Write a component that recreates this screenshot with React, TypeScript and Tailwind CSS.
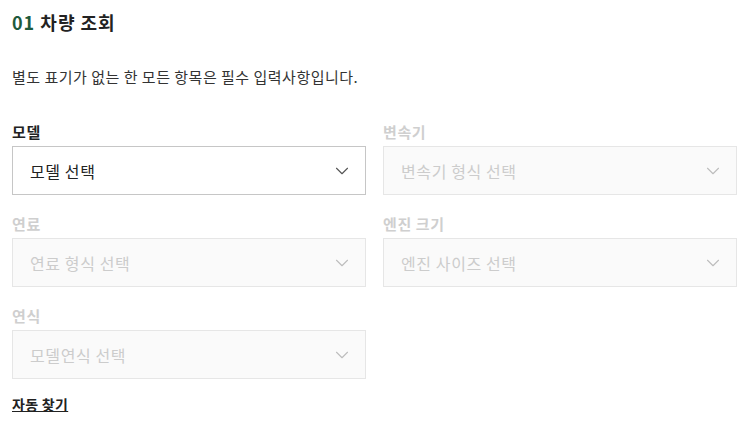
import { ChevronDown } from 'lucide-react';

type Field = { label: string; placeholder: string; disabled: boolean };

const fields: Field[] = [
  { label: '모델', placeholder: '모델 선택', disabled: false },
  { label: '변속기', placeholder: '변속기 형식 선택', disabled: true },
  { label: '연료', placeholder: '연료 형식 선택', disabled: true },
  { label: '엔진 크기', placeholder: '엔진 사이즈 선택', disabled: true },
  { label: '연식', placeholder: '모델연식 선택', disabled: true },
];

function SelectBox({ field }: { field: Field }) {
  return (
    <div>
      <div
        className={
          field.disabled
            ? 'text-[15px] leading-5 font-bold tracking-[0.6px] text-[#cfcfcf] mb-[4px]'
            : 'text-[15px] leading-5 font-bold tracking-[0.6px] text-[#222] mb-[4px]'
        }
      >
        {field.label}
      </div>
      <div
        className={
          field.disabled
            ? 'h-[49px] border border-[#e6e6e6] bg-[#fafafa] flex items-center justify-between pl-[17px] pr-[12px]'
            : 'h-[49px] border border-[#c6c6c6] bg-white flex items-center justify-between pl-[17px] pr-[12px]'
        }
      >
        <span
          className={
            field.disabled
              ? 'text-[16px] tracking-[0.6px] text-[#cccccc]'
              : 'text-[16px] tracking-[0.6px] text-[#222]'
          }
        >
          {field.placeholder}
        </span>
        <ChevronDown
          size={22}
          strokeWidth={1.2}
          className={field.disabled ? 'text-[#bdbdbd]' : 'text-[#555]'}
        />
      </div>
    </div>
  );
}

export default function App() {
  return (
    <div
      className="w-[751px] h-[433px] bg-white pl-[12px] pt-[10px]"
      style={{ fontFamily: '"Noto Sans CJK KR", "Noto Sans", sans-serif' }}
    >
      <h1 className="text-[18px] leading-6 font-bold tracking-[1px] text-[#222]">
        <span className="text-[#1e5a3c]">01</span> 차량 조회
      </h1>
      <p className="mt-[33px] text-[15px] leading-5 tracking-[0.5px] text-[#333]">
        별도 표기가 없는 한 모든 항목은 필수 입력사항입니다.
      </p>
      <div className="mt-[35px] grid grid-cols-[354px_354px] gap-x-[17px] gap-y-[19px]">
        {fields.map((f) => (
          <SelectBox key={f.label} field={f} />
        ))}
      </div>
      <a
        href="#"
        className="block mt-[15px] w-fit text-[14px] leading-5 font-bold tracking-[0.3px] text-[#222] underline"
      >
        자동 찾기
      </a>
    </div>
  );
}
